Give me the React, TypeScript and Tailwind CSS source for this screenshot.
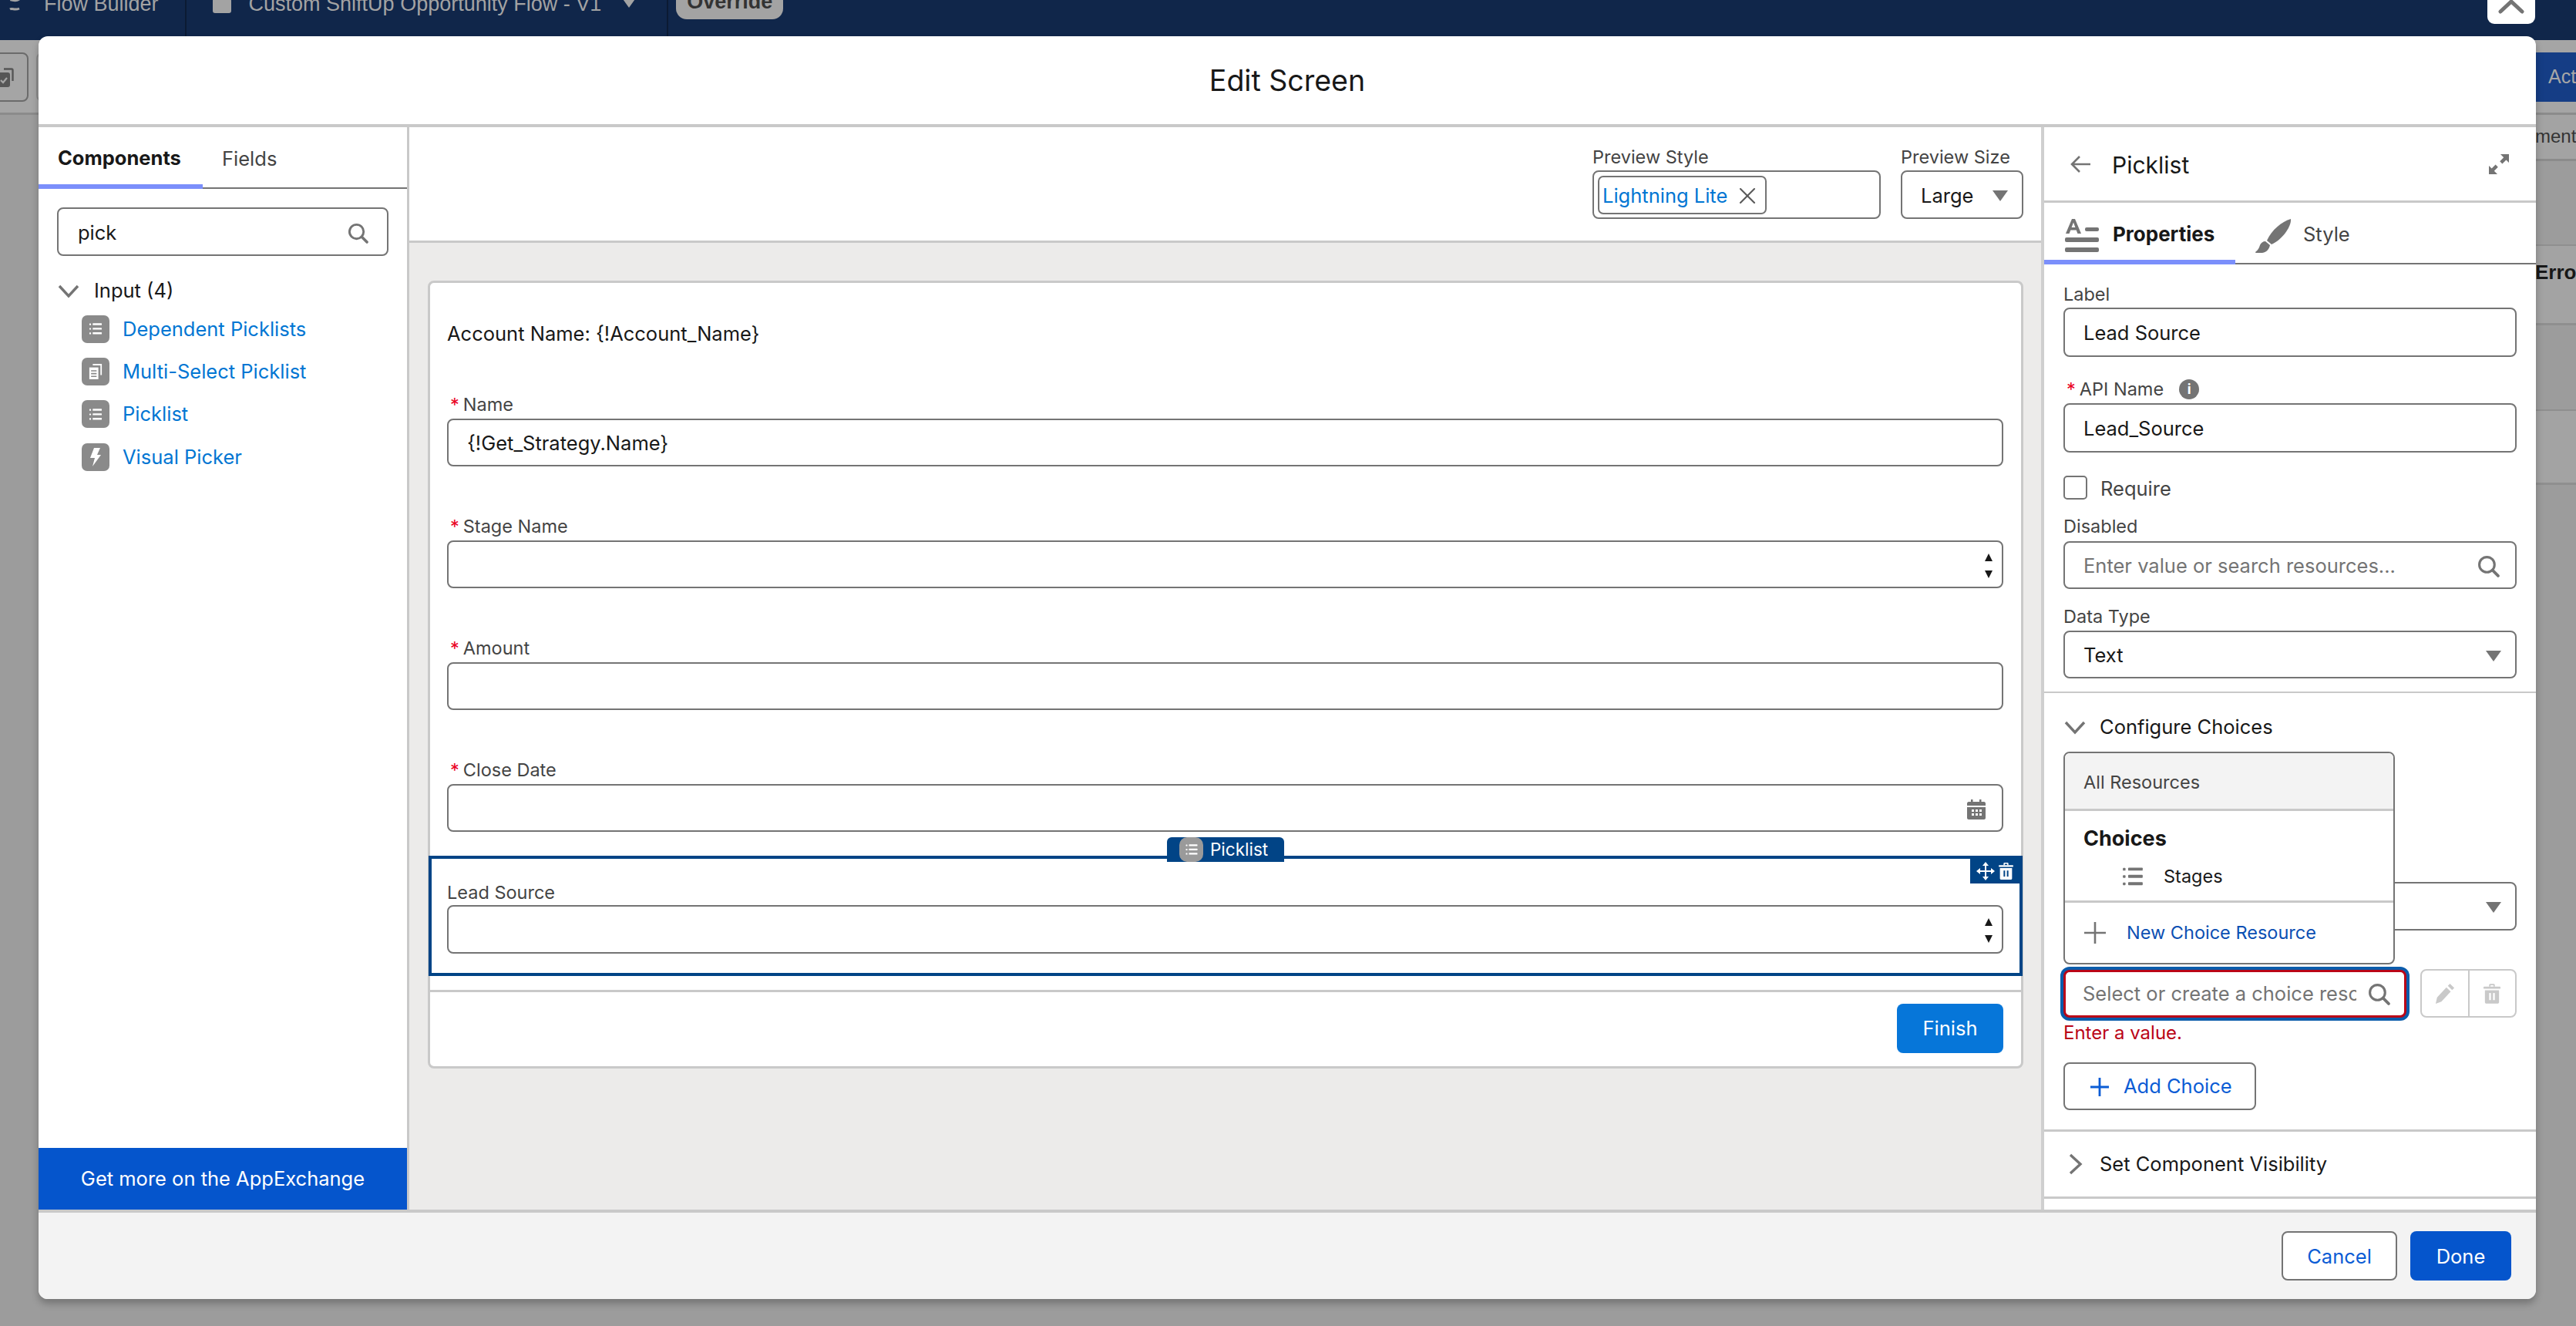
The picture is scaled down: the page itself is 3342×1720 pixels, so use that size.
import React from "react";
import { X } from "lucide-react";

const SearchIcon = ({ className }: { className: string }) => (
  <svg viewBox="0 0 28 28" className={className} fill="none" stroke="#747474">
    <circle cx="12" cy="12" r="9.5" strokeWidth="3" />
    <path d="M19 19l7 7" strokeWidth="3.6" strokeLinecap="round" />
  </svg>
);

const Caret = ({ className = "w-[20px] h-[14px]" }: { className?: string }) => (
  <svg viewBox="0 0 20 14" className={className} fill="#747474">
    <path d="M0 0h20L10 14z" />
  </svg>
);

const ListGlyph = ({ className, color = "#fff" }: { className: string; color?: string }) => (
  <svg viewBox="0 0 30 28" className={className} fill={color}>
    <rect x="0" y="1" width="4" height="4" rx="1" />
    <rect x="0" y="12" width="4" height="4" rx="1" />
    <rect x="0" y="23" width="4" height="4" rx="1" />
    <rect x="8" y="0.5" width="22" height="4.5" rx="1" />
    <rect x="8" y="11.5" width="22" height="4.5" rx="1" />
    <rect x="8" y="22.5" width="22" height="4.5" rx="1" />
  </svg>
);

const Chip = ({ children }: { children: React.ReactNode }) => (
  <div className="flex h-[36px] w-[36px] shrink-0 items-center justify-center rounded-[7px] bg-[#8a8a8a]">
    {children}
  </div>
);

const TrashGlyph = ({ className, color = "#fff", hole = "#014486" }: { className: string; color?: string; hole?: string }) => (
  <svg viewBox="0 0 24 28" className={className} fill={color}>
    <rect x="0" y="4" width="24" height="3" rx="1" />
    <path d="M8 4V1.5C8 .7 8.7 0 9.5 0h5c.8 0 1.5.7 1.5 1.5V4h-2V2h-4v2z" />
    <path d="M2 9h20v17c0 1-1 2-2 2H4c-1 0-2-1-2-2z" />
    <rect x="8" y="13" width="2.5" height="10" fill={hole} />
    <rect x="13.5" y="13" width="2.5" height="10" fill={hole} />
  </svg>
);

const MoveGlyph = () => (
  <svg viewBox="0 0 24 24" className="h-[24px] w-[24px]" fill="#fff" stroke="#fff" strokeWidth="2">
    <path d="M12 2v20M2 12h20" fill="none" />
    <path d="M12 0l4 5H8zM12 24l4-5H8zM0 12l5-4v8zM24 12l-5-4v8z" stroke="none" />
  </svg>
);

const RequiredMark = () => <span className="mr-[5px] text-[#ea001e]">*</span>;

const inputBox = "flex items-center rounded-[8px] border-2 border-[#747474] bg-white pt-[3px]";

const CanvasField = ({ label, children, className = "" }: { label: string; children?: React.ReactNode; className?: string }) => (
  <div className={className}>
    <div className="mb-[3px] h-[30px] pl-[4px] text-[23.5px] leading-[30px] text-[#444444]">
      <RequiredMark />
      {label}
    </div>
    <div className={`${inputBox} h-[62px] justify-between px-[24px] text-[25.5px] text-[#181818]`}>{children}</div>
  </div>
);

const Updown = () => (
  <div className="flex -mr-[12px] flex-col gap-[12px]">
    <svg viewBox="0 0 10 10" className="h-[10px] w-[10px]" fill="#181818"><path d="M5 0l5 10H0z" /></svg>
    <svg viewBox="0 0 10 10" className="h-[10px] w-[10px]" fill="#181818"><path d="M5 10l5-10H0z" /></svg>
  </div>
);

const SidebarItem = ({ icon, label }: { icon: React.ReactNode; label: string }) => (
  <div className="flex h-[55.4px] items-center pl-[56px] text-[25.5px] text-[#0176d3]">
    <Chip>{icon}</Chip>
    <span className="ml-[17px]">{label}</span>
  </div>
);

const PanelLabel = ({ children, className = "" }: { children: React.ReactNode; className?: string }) => (
  <div className={`h-[30px] text-[23.5px] leading-[30px] text-[#444444] ${className}`}>{children}</div>
);

const Chevron = ({ open }: { open: boolean }) => (
  <svg viewBox="0 0 28 28" className="h-[28px] w-[28px]" fill="none" stroke="#747474" strokeWidth="3.4">
    {open ? <path d="M2 8l12 13L26 8" /> : <path d="M8 2l13 12L8 26" />}
  </svg>
);

export default function App() {
  return (
    <div className="relative h-[1720px] w-[3342px] overflow-hidden bg-[#9c9c9c] text-[#181818] [font-family:Inter,sans-serif]">
      {/* page behind the modal */}
      <div className="flex h-[52px] items-start bg-[#10264a] text-[#a3a3a3]">
        <svg viewBox="0 0 18 18" className="ml-[10px] h-[18px] w-[18px]" fill="none" stroke="#a3a3a3" strokeWidth="3">
          <path d="M3 0c3-1 6 3 12-1M3 12c3-2 6 2 12-1" />
        </svg>
        <span className="-mt-[11px] ml-[29px] text-[27px] leading-[32px] [font-family:'Liberation_Sans',sans-serif]">Flow Builder</span>
        <div className="ml-[34px] h-[47px] w-[2px] bg-[#0b1a33]" />
        <div className="ml-[34px] -mt-[2px] h-[19px] w-[24px] rounded-[3px] bg-[#a3a3a3]" />
        <span className="-mt-[11px] ml-[23px] text-[27px] leading-[32px] [font-family:'Liberation_Sans',sans-serif]">Custom ShiftUp Opportunity Flow - V1</span>
        <svg viewBox="0 0 20 14" className="ml-[26px] h-[10px] w-[20px]" fill="#a3a3a3"><path d="M0 0h20L10 14z" /></svg>
        <div className="ml-[39px] h-[47px] w-[2px] bg-[#0b1a33]" />
        <div className="ml-[10px] flex h-[25px] w-[139px] justify-center overflow-hidden rounded-b-[14px] bg-[#a3a3a3]">
          <span className="-mt-[13px] text-[27px] font-semibold leading-[30px] text-[#333333] [font-family:'Liberation_Sans',sans-serif]">Override</span>
        </div>
      </div>
      <div className="flex h-[97px] justify-between border-b-[3px] border-[#8b8b8b] bg-[#a5a5a5] pt-[16px]">
        <div className="flex gap-[10px]">
          <div className="-ml-[20px] flex h-[64px] w-[57px] items-center justify-end rounded-[8px] border-2 border-[#6b6b6b] pr-[17px]">
            <svg viewBox="0 0 18 25" className="h-[25px] w-[18px]" fill="none">
              <path d="M5 1.5h10c1 0 1.5.5 1.5 1.5v14" stroke="#565656" strokeWidth="2.4" />
              <rect x="-6" y="6" width="19" height="19" rx="3" fill="#565656" />
              <path d="M1 16l3 3 5-6" stroke="#a5a5a5" strokeWidth="2.2" />
            </svg>
          </div>
          <div className="h-[64px] w-[40px] rounded-[8px] border-2 border-[#8b8b8b]" />
        </div>
        <div className="flex h-[64px] w-[53px] items-center overflow-hidden bg-[#153d85] pl-[17px]">
          <span className="text-[25px] text-[#a7a7a7] [font-family:'Liberation_Sans',sans-serif]">Actions</span>
        </div>
      </div>
      <div className="ml-auto w-[53px] overflow-hidden [font-family:'Liberation_Sans',sans-serif]">
        <div className="h-[60px] overflow-hidden whitespace-nowrap border-b-[3px] border-[#8b8b8b] bg-[#a3a3a3] pt-[13px] text-[24px] leading-[30px] text-[#333333]">ment</div>
        <div className="h-[110px] border-b-[2px] border-[#8f8f8f] bg-[#9c9c9c]" />
        <div className="h-[103px] overflow-hidden border-b-[3px] border-[#8f8f8f] bg-[#a3a3a3] pt-[18px] text-[26px] font-bold leading-[32px] text-[#181818]">Error</div>
        <div className="h-[111px] border-b-[2px] border-[#8f8f8f] bg-[#9c9c9c]" />
        <div className="h-[96px] border-b-[3px] border-[#8f8f8f] bg-[#a3a3a3]" />
      </div>

      {/* close button of the modal */}
      <div className="absolute left-[3227px] top-0 flex h-[31px] w-[62px] justify-center overflow-hidden rounded-b-[9px] bg-white">
        <svg viewBox="0 0 34 18" className="h-[18px] w-[34px]" fill="none" stroke="#747474" strokeWidth="5" strokeLinecap="round">
          <path d="M3 15L17 2l14 13" />
        </svg>
      </div>

      {/* Edit Screen modal */}
      <div className="absolute left-[50px] top-[47px] flex h-[1638px] w-[3240px] flex-col overflow-hidden rounded-[12px] bg-white shadow-[0_6px_10px_rgba(0,0,0,0.25)]">
        <div className="flex h-[118px] shrink-0 items-center justify-center border-b-4 border-[#c9c9c9] pt-[2px] text-[37.5px] text-[#181818]">
          Edit Screen
        </div>

        <div className="flex min-h-0 flex-1">
          {/* palette */}
          <div className="flex w-[481px] shrink-0 flex-col border-r-[3px] border-[#c9c9c9]">
            <div className="flex h-[80px] shrink-0 border-b-2 border-[#747474]">
              <div className="-mb-[2px] flex h-[80px] w-[213px] items-center border-b-[6px] border-[#7b8ffb] pl-[25px] pt-[6px] text-[25.5px] font-bold">
                Components
              </div>
              <div className="flex items-center pl-[25px] pt-[4px] text-[25.5px] text-[#444444]">Fields</div>
            </div>
            <div className={`${inputBox} mx-[24px] mt-[24px] h-[63px] justify-between pl-[25px] pr-[24px] text-[25.5px]`}>
              pick
              <SearchIcon className="h-[27px] w-[27px]" />
            </div>
            <div className="mt-[30px] flex h-[30px] items-center pl-[25px] text-[25.5px]">
              <Chevron open />
              <span className="ml-[19px]">Input (4)</span>
            </div>
            <div className="mt-[7px]">
              <SidebarItem label="Dependent Picklists" icon={<ListGlyph className="h-[15px] w-[18px]" />} />
              <SidebarItem
                label="Multi-Select Picklist"
                icon={
                  <svg viewBox="0 0 20 22" className="h-[20px] w-[18px]" fill="#fff">
                    <path d="M6 0h13v16h-2V2H6z" />
                    <path d="M1 5h13v17H1z" />
                    <path d="M3.5 9h8v1.8h-8zM3.5 13h8v1.8h-8zM3.5 17h8v1.8h-8z" fill="#8a8a8a" />
                  </svg>
                }
              />
              <SidebarItem label="Picklist" icon={<ListGlyph className="h-[15px] w-[18px]" />} />
              <SidebarItem
                label="Visual Picker"
                icon={
                  <svg viewBox="0 0 14 24" className="h-[24px] w-[14px]" fill="#fff"><path d="M5 0h8L9 9h5L3 24l3-11H0z" /></svg>
                }
              />
            </div>
            <div className="mt-auto flex h-[80px] shrink-0 items-center justify-center bg-[#0555cc] text-[25.5px] text-white">
              Get more on the AppExchange
            </div>
          </div>

          {/* preview canvas */}
          <div className="flex min-w-0 flex-1 flex-col border-r-4 border-[#cfcfcf]">
            <div className="flex h-[150px] shrink-0 justify-end gap-[26px] border-b-[3px] border-[#c9c9c9] pr-[23px] pt-[24px]">
              <div className="w-[374px]">
                <div className="mb-[2px] h-[30px] text-[23.5px] leading-[30px] text-[#444444]">Preview Style</div>
                <div className="flex h-[63px] items-center rounded-[8px] border-2 border-[#747474] bg-white px-[5px]">
                  <div className="flex h-[50px] w-[219px] items-center justify-between rounded-[7px] border-2 border-[#747474] pl-[4px] pr-[5px] pt-[3px] text-[25.5px] text-[#0176d3]">
                    Lightning Lite
                    <X className="h-[36px] w-[36px] text-[#5a5a5a]" strokeWidth={1.4} />
                  </div>
                </div>
              </div>
              <div className="w-[159px]">
                <div className="mb-[2px] h-[30px] text-[23.5px] leading-[30px] text-[#444444]">Preview Size</div>
                <div className={`${inputBox} h-[63px] justify-between pl-[24px] pr-[18px] text-[25.5px]`}>
                  Large
                  <Caret />
                </div>
              </div>
            </div>
            <div className="min-h-0 flex-1 bg-[#ecebea] pl-[24px] pr-[23px] pt-[49px]">
              <div className="h-[1022px] rounded-[8px] border-[3px] border-[#c9c9c9] bg-white">
                <div className="pl-[22px] pr-[23px]">
                  <div className="mt-[51px] h-[30px] text-[25.5px] leading-[30px]">Account Name: {"{!Account_Name}"}</div>
                  <CanvasField label="Name" className="mt-[62px]">{"{!Get_Strategy.Name}"}</CanvasField>
                  <CanvasField label="Stage Name" className="mt-[63px]"><span /><Updown /></CanvasField>
                  <CanvasField label="Amount" className="mt-[63px]" />
                  <CanvasField label="Close Date" className="mt-[63px]">
                    <span />
                    <svg viewBox="0 0 24 26" className="-mr-[3px] h-[26px] w-[24px]" fill="#747474">
                      <path d="M5 0h2.5v3H16V0h2.5v3H22c1 0 2 1 2 2v3H0V5c0-1 1-2 2-2h3z" />
                      <path fillRule="evenodd" d="M0 10h24v14c0 1-1 2-2 2H2c-1 0-2-1-2-2zM6 13v3h3v-3zM11 13v3h3v-3zM16 13v3h3v-3zM6 18v3h3v-3zM11 18v3h3v-3zM16 18v3h3v-3z" />
                    </svg>
                  </CanvasField>
                </div>

                {/* selected component */}
                <div className="relative -mx-[2px] mt-[31px] h-[156px] border-4 border-[#014486] pl-[20px] pr-[21px] pt-[27px]">
                  <div className="absolute -top-[28px] left-[954px] flex h-[32px] w-[152px] items-center rounded-t-[6px] bg-[#014486] pl-[16px]">
                    <div className="flex h-[32px] w-[31px] items-center justify-center rounded-[10px] bg-[#9a9a9a]">
                      <ListGlyph className="h-[14px] w-[16px]" />
                    </div>
                    <span className="ml-[9px] text-[22.5px] text-white">Picklist</span>
                  </div>
                  <div className="absolute right-0 top-0 flex h-[32px] w-[64px] items-center justify-center gap-[5px] bg-[#014486]">
                    <MoveGlyph />
                    <TrashGlyph className="h-[22px] w-[19px]" />
                  </div>
                  <div className="mb-[3px] h-[30px] pt-[2px] text-[23.5px] leading-[30px] text-[#444444]">Lead Source</div>
                  <div className={`${inputBox} h-[63px] justify-end px-[24px]`}><Updown /></div>
                </div>

                <div className="mt-[18px] flex h-[98px] justify-end border-t-[3px] border-[#c9c9c9] pr-[23px] pt-[15px]">
                  <div className="flex h-[64px] w-[138px] items-center justify-center rounded-[8px] bg-[#0676d9] text-[25.5px] text-white">Finish</div>
                </div>
              </div>
            </div>
          </div>

          {/* properties panel */}
          <div className="flex w-[638px] shrink-0 flex-col">
            <div className="flex h-[98px] shrink-0 items-center justify-between border-b-[3px] border-[#c9c9c9] pl-[33px] pr-[35px]">
              <div className="flex items-center">
                <svg viewBox="0 0 28 24" className="h-[24px] w-[28px]" fill="none" stroke="#747474" strokeWidth="2.6">
                  <path d="M27 12H3M13 2L3 12l10 10" />
                </svg>
                <span className="ml-[27px] pt-[4px] text-[30px]">Picklist</span>
              </div>
              <svg viewBox="0 0 26 26" className="h-[26px] w-[26px]" fill="#747474">
                <path d="M15 0h11v11l-3.6-3.6-5 5-3.2-3.2 5-5zM11 26H0V15l3.6 3.6 5-5 3.2 3.2-5 5z" />
              </svg>
            </div>
            <div className="flex h-[80px] shrink-0 border-b-2 border-[#747474]">
              <div className="-mb-[2px] flex h-[80px] w-[248px] items-start border-b-[6px] border-[#7b8ffb] pl-[27px] pt-[21px]">
                <svg viewBox="0 0 44 44" className="h-[44px] w-[44px]" fill="#747474">
                  <path d="M9 0h4l8 19h-4.6l-1.7-4.4H7.3L5.6 19H1zM8.6 11h4.8L11 4.5z" />
                  <rect x="26" y="11" width="18" height="5" rx="2" />
                  <rect x="0" y="24" width="44" height="6" rx="2" />
                  <rect x="0" y="37" width="44" height="6" rx="2" />
                </svg>
                <span className="ml-[18px] text-[26px] font-bold leading-[40px]">Properties</span>
              </div>
              <div className="flex items-start pl-[26px] pt-[21px]">
                <svg viewBox="0 0 46 44" className="h-[44px] w-[46px]" fill="#747474">
                  <path d="M46 0C47 9 36 26 21 33l-6-5C21 14 35 3 46 0z" />
                  <path d="M13 29l6 5c-1 5-4 9-10 10-5 1-10 0-9-1 4-3 5-6 6-9 1-3 4-5 7-5z" />
                </svg>
                <span className="ml-[16px] text-[25.5px] leading-[40px] text-[#444444]">Style</span>
              </div>
            </div>

            <div className="px-[25px] pt-[24px]">
              <PanelLabel className="mb-[2px]">Label</PanelLabel>
              <div className={`${inputBox} h-[64px] px-[24px] text-[25.5px]`}>Lead Source</div>
              <PanelLabel className="mb-[3px] mt-[27px] flex items-center pl-[4px]">
                <RequiredMark />
                API Name
                <span className="ml-[20px] flex h-[26px] w-[26px] items-center justify-center rounded-full bg-[#747474] text-[18px] font-bold text-white">i</span>
              </PanelLabel>
              <div className={`${inputBox} h-[64px] px-[24px] text-[25.5px]`}>Lead_Source</div>
              <div className="mt-[30px] flex h-[31px] items-center">
                <div className="h-[31px] w-[31px] rounded-[5px] border-2 border-[#747474]" />
                <span className="ml-[17px] pt-[3px] text-[25.5px] text-[#444444]">Require</span>
              </div>
              <PanelLabel className="mb-[4px] mt-[20px]">Disabled</PanelLabel>
              <div className={`${inputBox} h-[62px] justify-between pl-[24px] pr-[20px] text-[25.5px] text-[#747474]`}>
                Enter value or search resources...
                <SearchIcon className="h-[29px] w-[29px]" />
              </div>
              <PanelLabel className="mb-[3px] mt-[21px]">Data Type</PanelLabel>
              <div className={`${inputBox} h-[62px] justify-between pl-[24px] pr-[18px] text-[25.5px]`}>
                Text
                <Caret />
              </div>
            </div>
            <div className="mt-[17px] border-b-2 border-[#c9c9c9]" />

            <div className="px-[25px]">
              <div className="mt-[29px] flex h-[30px] items-center pl-[1px] text-[25.5px]">
                <Chevron open />
                <span className="ml-[18px]">Configure Choices</span>
              </div>
              <div className="relative">
                <div className="absolute left-0 top-[17px] z-10 flex h-[276px] w-[430px] flex-col overflow-hidden rounded-[8px] border-2 border-[#747474] bg-white">
                  <div className="flex h-[75px] shrink-0 items-center border-b-[3px] border-[#c9c9c9] bg-[#f3f3f3] pl-[24px] pt-[3px] text-[23.5px] text-[#444444]">All Resources</div>
                  <div className="h-[119px] shrink-0 border-b-[3px] border-[#c9c9c9] pl-[24px] pt-[19px]">
                    <div className="text-[27px] font-bold leading-[34px]">Choices</div>
                    <div className="mt-[14px] flex items-center pl-[49px]">
                      <ListGlyph className="h-[24px] w-[30px]" color="#747474" />
                      <span className="ml-[25px] text-[23.5px]">Stages</span>
                    </div>
                  </div>
                  <div className="flex flex-1 items-center pl-[25px] text-[23.5px] text-[#0b4fb3]">
                    <svg viewBox="0 0 28 28" className="h-[28px] w-[28px]" fill="none" stroke="#747474" strokeWidth="2.6"><path d="M14 0v28M0 14h28" /></svg>
                    <span className="ml-[27px]">New Choice Resource</span>
                  </div>
                </div>
              </div>
              <div className={`${inputBox} mt-[186px] h-[63px] justify-end pr-[18px]`}><Caret /></div>
              <div className="mt-[50px] flex items-center justify-between">
                <div className="flex h-[62px] w-[445px] items-center justify-between rounded-[8px] border-[3px] border-[#ba0517] bg-white pl-[22px] pr-[18px] pt-[1px] shadow-[0_0_0_4px_#0b5cab]">
                  <div className="w-[355px] overflow-hidden whitespace-nowrap text-[25.5px] text-[#747474]">Select or create a choice resource</div>
                  <SearchIcon className="h-[29px] w-[29px]" />
                </div>
                <div className="flex h-[63px] w-[125px]">
                  <div className="flex flex-1 items-center justify-center rounded-l-[8px] border-2 border-[#c9c9c9]">
                    <svg viewBox="0 0 26 28" className="h-[26px] w-[26px]" fill="#c9c9c9">
                      <path d="M20 0l6 6-3 3-6-6zM15 5l6 6L8 25l-8 3 2-9z" />
                    </svg>
                  </div>
                  <div className="-ml-[2px] flex flex-1 items-center justify-center rounded-r-[8px] border-2 border-[#c9c9c9]">
                    <TrashGlyph className="h-[26px] w-[22px]" color="#c9c9c9" hole="#ffffff" />
                  </div>
                </div>
              </div>
              <div className="mt-[5px] h-[30px] text-[24px] leading-[30px] text-[#ba0517]">Enter a value.</div>
              <div className="mt-[23px] flex h-[62px] w-[250px] items-center rounded-[8px] border-2 border-[#747474] bg-white pl-[33px] pt-[1px] text-[25.5px] text-[#0b5cd5]">
                <svg viewBox="0 0 24 24" className="h-[24px] w-[24px]" fill="none" stroke="#0b5cd5" strokeWidth="2.8"><path d="M12 0v24M0 12h24" /></svg>
                <span className="ml-[19px]">Add Choice</span>
              </div>
            </div>
            <div className="mt-[25px] border-b-[3px] border-[#c9c9c9]" />
            <div className="mt-[27px] flex h-[30px] items-center pl-[26px] text-[25.5px]">
              <Chevron open={false} />
              <span className="ml-[18px]">Set Component Visibility</span>
            </div>
            <div className="mt-[27px] border-b-[3px] border-[#c9c9c9]" />
          </div>
        </div>

        {/* footer */}
        <div className="flex h-[116px] shrink-0 items-start justify-end gap-[17px] border-t-4 border-[#c9c9c9] bg-[#f3f3f3] pr-[32px] pt-[24px]">
          <div className="flex h-[64px] w-[150px] items-center justify-center rounded-[8px] border-2 border-[#747474] bg-white pt-[2px] text-[25.5px] text-[#0b5cd5]">Cancel</div>
          <div className="flex h-[64px] w-[131px] items-center justify-center rounded-[8px] bg-[#0555cc] pt-[2px] text-[25.5px] text-white">Done</div>
        </div>
      </div>
    </div>
  );
}
